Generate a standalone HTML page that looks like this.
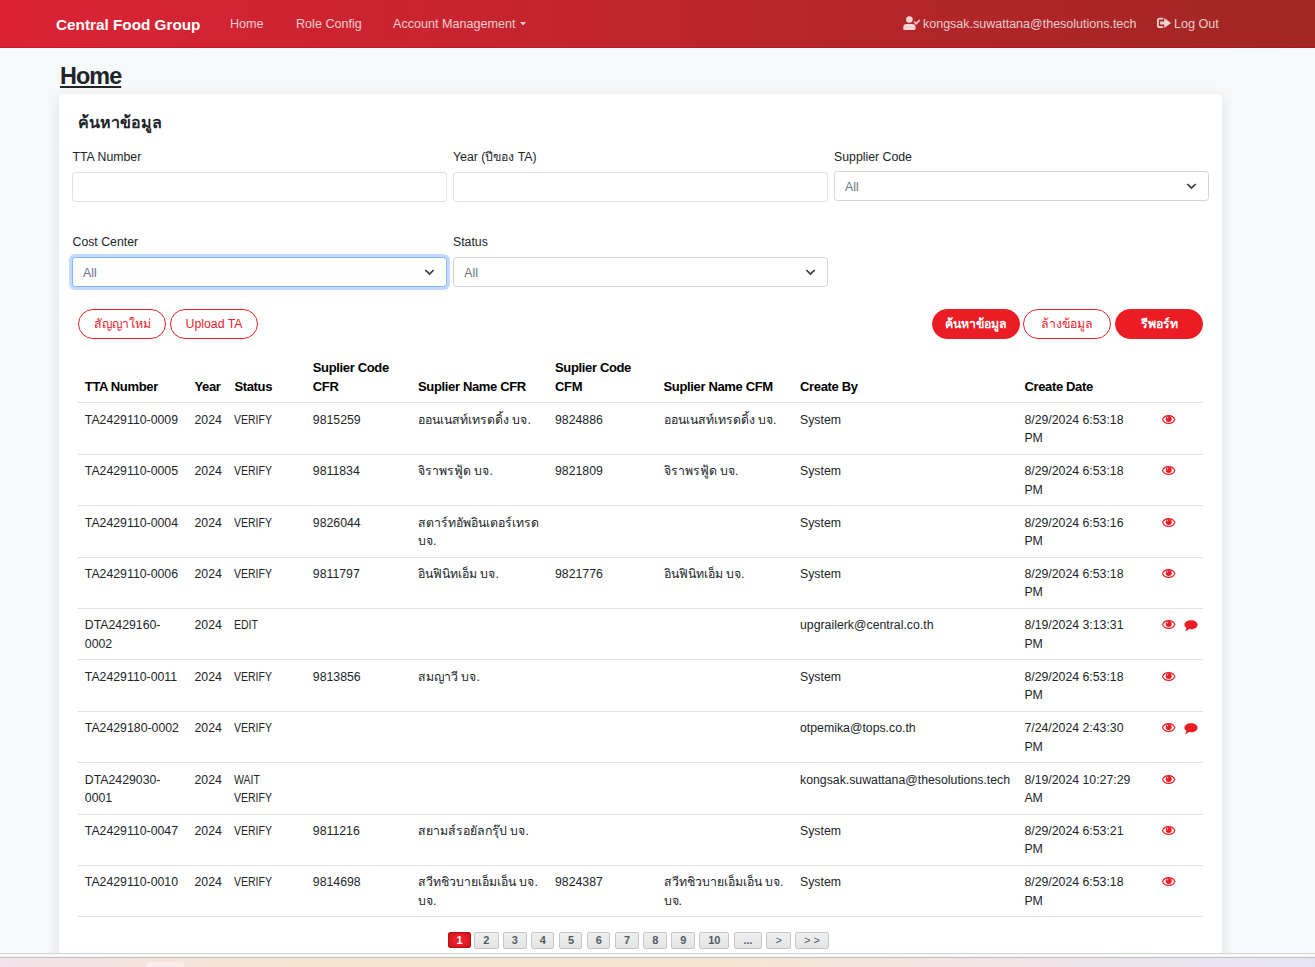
<!DOCTYPE html>
<html><head><meta charset="utf-8">
<style>
*{box-sizing:border-box;margin:0;padding:0}
html,body{width:1315px;height:967px;overflow:hidden}
body{background:#f7f8fa;font-family:"Liberation Sans",sans-serif;color:#212529;position:relative;font-size:12.3px}
.abs{position:absolute;white-space:nowrap}
#nav{position:absolute;left:0;top:0;width:1315px;height:48px;background:linear-gradient(90deg,#dc2335 0%,#a12624 100%);box-shadow:inset 0 -1px 0 rgba(180,0,20,.35)}
#nav .t{position:absolute;white-space:nowrap;color:rgba(255,255,255,.78);font-size:12.6px;line-height:16px}
#brand{position:absolute;left:56px;top:15.6px;color:#fff;font-weight:bold;font-size:15.3px;line-height:18px;white-space:nowrap}
#title{position:absolute;left:60px;top:62.5px;font-weight:bold;font-size:23.4px;letter-spacing:-0.95px;line-height:26px;text-decoration:underline;text-decoration-thickness:2px;text-underline-offset:2px;color:#212529}
#card{position:absolute;left:59px;top:94px;width:1163px;height:900px;background:#fff;border-radius:5px;box-shadow:0 3px 14px rgba(0,0,0,.1)}
.lbl{position:absolute;font-size:12.3px;line-height:16px;white-space:nowrap;color:#212529}
.inp{position:absolute;height:30px;width:374.5px;border:1px solid #dee2e6;border-radius:3.2px;background:#fff}
.sel{position:absolute;height:30px;width:374.5px;border:1px solid #d0d5db;border-radius:3.2px;background:#fff}
.sel span{position:absolute;left:10px;top:7px;font-size:12.3px;line-height:16px;color:#6c757d}
.sel svg{position:absolute;right:11px;top:9.8px}
.focus{border-color:#86b7fe;box-shadow:0 0 0 3px rgba(13,110,253,.25)}
.btn{position:absolute;top:309px;height:30px;border-radius:15px;border:1px solid #ea2129;color:#ea2129;background:#fff;font-size:12.3px;line-height:29.5px;text-align:center;white-space:nowrap}
.btn.fill{background:#ec1c24;color:#fff;font-weight:bold}
.hd{position:absolute;font-weight:bold;font-size:13px;letter-spacing:-0.35px;line-height:19px;white-space:nowrap;color:#000}
.ln{position:absolute;left:78px;width:1125px;height:1px;background:#dee2e6}
.c{position:absolute;font-size:12.3px;line-height:18.6px;white-space:nowrap;color:#212529}
.pg{position:absolute;top:931.5px;height:17px;border:1px solid #c6c6c6;border-radius:2px;background:linear-gradient(#f0f0f0,#e3e3e3);color:#555b66;font-weight:bold;font-size:11px;line-height:15px;text-align:center;white-space:nowrap}
.pg.act{top:932px;height:16px;line-height:14px;background:radial-gradient(ellipse at center,#ee1d26 40%,#c8121b 100%);border-color:#b50f17;color:#fff}
#tb{position:absolute;left:0;top:953px;width:1315px;height:14px;border-top:1px solid #d6d6d6;background:linear-gradient(90deg,#f2e2ea 0%,#f4e3dc 12%,#f5e4d0 22%,#f5e5ce 52%,#f2e5e3 72%,#ebe4ee 88%,#e6e4f4 100%)}
#tb:before{content:"";position:absolute;left:0;top:0;width:100%;height:3px;background:#f8f8f8;border-bottom:1px solid #bdbdbd}
#tbi{position:absolute;left:146px;top:8px;width:38px;height:10px;border-radius:4px;background:#f8ecec}
</style></head><body>
<div id="nav">
  <div id="brand">Central Food Group</div>
  <div class="t" style="left:230px;top:16px">Home</div>
  <div class="t" style="left:296px;top:16px">Role Config</div>
  <div class="t" style="left:393px;top:16px">Account Management</div>
  <svg class="abs" style="left:520px;top:22px" width="6" height="4" viewBox="0 0 6 4"><path d="M0 0H6L3 3.5Z" fill="rgba(255,255,255,.78)"/></svg>
  <svg class="abs" style="left:903px;top:16px" width="18" height="15" viewBox="0 0 18 15"><circle cx="6.4" cy="3.5" r="3.3" fill="rgba(255,255,255,.8)"/><path d="M0.3 14V11.2Q0.3 7.9 3.6 7.9H9.2Q12.5 7.9 12.5 11.2V13Q12.5 14 11.5 14H1.3Q0.3 14 0.3 13Z" fill="rgba(255,255,255,.8)"/><path d="M11.2 5.6L13.1 7.9L16.7 4" stroke="rgba(255,255,255,.8)" stroke-width="1.6" fill="none"/></svg>
  <div class="t" style="left:923px;top:16px;font-size:12.5px">kongsak.suwattana@thesolutions.tech</div>
  <svg class="abs" style="left:1157px;top:17px" width="15" height="12" viewBox="0 0 15 12"><path d="M6.2 1.7H2.6Q0.9 1.7 0.9 3.4V8.5Q0.9 10.2 2.6 10.2H6.2" stroke="rgba(255,255,255,.8)" stroke-width="1.8" fill="none"/><path d="M3.2 4.4H7.3V0.9L14 6L7.3 11.1V7.6H3.2Z" fill="rgba(255,255,255,.8)"/></svg>
  <div class="t" style="left:1174px;top:16px">Log Out</div>
</div>
<div id="title">Home</div>
<div id="card"></div>
<div class="abs" style="left:78px;top:112.5px;font-weight:bold;font-size:16px;line-height:20px;color:#212529">ค้นหาข้อมูล</div>
<div class="lbl" style="left:72.5px;top:149.2px">TTA Number</div>
<div class="lbl" style="left:453px;top:149.2px">Year (ปีของ TA)</div>
<div class="lbl" style="left:834px;top:149.2px">Supplier Code</div>
<div class="inp" style="left:72px;top:171.5px"></div>
<div class="inp" style="left:453.3px;top:171.5px"></div>
<div class="sel" style="left:834px;top:171px;height:29.6px"><span>All</span><svg width="11" height="8" viewBox="0 0 11 8"><path d="M1.3 2L5.5 6.1L9.7 2" stroke="#343a40" stroke-width="1.7" fill="none"/></svg></div>
<div class="lbl" style="left:72.5px;top:233.7px">Cost Center</div>
<div class="lbl" style="left:453px;top:233.7px">Status</div>
<div class="sel focus" style="left:72px;top:257px"><span>All</span><svg width="11" height="8" viewBox="0 0 11 8"><path d="M1.3 2L5.5 6.1L9.7 2" stroke="#343a40" stroke-width="1.7" fill="none"/></svg></div>
<div class="sel" style="left:453.3px;top:257px"><span>All</span><svg width="11" height="8" viewBox="0 0 11 8"><path d="M1.3 2L5.5 6.1L9.7 2" stroke="#343a40" stroke-width="1.7" fill="none"/></svg></div>
<div class="btn" style="left:78px;width:88px">สัญญาใหม่</div>
<div class="btn" style="left:170px;width:88px">Upload TA</div>
<div class="btn fill" style="left:932px;width:88px">ค้นหาข้อมูล</div>
<div class="btn" style="left:1023px;width:88px">ล้างข้อมูล</div>
<div class="btn fill" style="left:1115px;width:88px">รีพอร์ท</div>
<div class="hd" style="left:84.8px;top:376.9px">TTA Number</div>
<div class="hd" style="left:194.5px;top:376.9px">Year</div>
<div class="hd" style="left:234.4px;top:376.9px">Status</div>
<div class="hd" style="left:312.8px;top:357.9px">Suplier Code<br>CFR</div>
<div class="hd" style="left:418px;top:376.9px">Suplier Name CFR</div>
<div class="hd" style="left:555px;top:357.9px">Suplier Code<br>CFM</div>
<div class="hd" style="left:663.5px;top:376.9px">Suplier Name CFM</div>
<div class="hd" style="left:800px;top:376.9px">Create By</div>
<div class="hd" style="left:1024.4px;top:376.9px">Create Date</div>
<div class="ln" style="top:402px"></div>
<div class="c" style="left:84.8px;top:410.7px">TA2429110-0009</div>
<div class="c" style="left:194.5px;top:410.7px">2024</div>
<div class="c" style="left:234.4px;top:410.7px;transform:scaleX(.855);transform-origin:0 0">VERIFY</div>
<div class="c" style="left:312.8px;top:410.7px">9815259</div>
<div class="c" style="left:418.0px;top:410.7px">ออนเนสท์เทรดดิ้ง บจ.</div>
<div class="c" style="left:555.0px;top:410.7px">9824886</div>
<div class="c" style="left:663.5px;top:410.7px">ออนเนสท์เทรดดิ้ง บจ.</div>
<div class="c" style="left:800.0px;top:410.7px">System</div>
<div class="c" style="left:1024.4px;top:410.7px">8/29/2024 6:53:18<br>PM</div>
<svg class="abs" style="left:1161.5px;top:414.7px" width="14" height="9" viewBox="0 0 14 9"><path d="M6.7 0.6C3.6 0.6 1.3 2.5 0.5 4.5C1.3 6.5 3.6 8.4 6.7 8.4C9.8 8.4 12.1 6.5 12.9 4.5C12.1 2.5 9.8 0.6 6.7 0.6Z" fill="none" stroke="#ec1c24" stroke-width="1.1"/><circle cx="6.7" cy="4" r="3" fill="#ec1c24"/><circle cx="5.5" cy="2.7" r=".75" fill="#fff" opacity=".75"/></svg>
<div class="ln" style="top:453.8px"></div>
<div class="c" style="left:84.8px;top:462.1px">TA2429110-0005</div>
<div class="c" style="left:194.5px;top:462.1px">2024</div>
<div class="c" style="left:234.4px;top:462.1px;transform:scaleX(.855);transform-origin:0 0">VERIFY</div>
<div class="c" style="left:312.8px;top:462.1px">9811834</div>
<div class="c" style="left:418.0px;top:462.1px">จิราพรฟู้ด บจ.</div>
<div class="c" style="left:555.0px;top:462.1px">9821809</div>
<div class="c" style="left:663.5px;top:462.1px">จิราพรฟู้ด บจ.</div>
<div class="c" style="left:800.0px;top:462.1px">System</div>
<div class="c" style="left:1024.4px;top:462.1px">8/29/2024 6:53:18<br>PM</div>
<svg class="abs" style="left:1161.5px;top:466.1px" width="14" height="9" viewBox="0 0 14 9"><path d="M6.7 0.6C3.6 0.6 1.3 2.5 0.5 4.5C1.3 6.5 3.6 8.4 6.7 8.4C9.8 8.4 12.1 6.5 12.9 4.5C12.1 2.5 9.8 0.6 6.7 0.6Z" fill="none" stroke="#ec1c24" stroke-width="1.1"/><circle cx="6.7" cy="4" r="3" fill="#ec1c24"/><circle cx="5.5" cy="2.7" r=".75" fill="#fff" opacity=".75"/></svg>
<div class="ln" style="top:505.2px"></div>
<div class="c" style="left:84.8px;top:513.5px">TA2429110-0004</div>
<div class="c" style="left:194.5px;top:513.5px">2024</div>
<div class="c" style="left:234.4px;top:513.5px;transform:scaleX(.855);transform-origin:0 0">VERIFY</div>
<div class="c" style="left:312.8px;top:513.5px">9826044</div>
<div class="c" style="left:418.0px;top:513.5px">สตาร์ทอัพอินเตอร์เทรด<br>บจ.</div>
<div class="c" style="left:800.0px;top:513.5px">System</div>
<div class="c" style="left:1024.4px;top:513.5px">8/29/2024 6:53:16<br>PM</div>
<svg class="abs" style="left:1161.5px;top:517.5px" width="14" height="9" viewBox="0 0 14 9"><path d="M6.7 0.6C3.6 0.6 1.3 2.5 0.5 4.5C1.3 6.5 3.6 8.4 6.7 8.4C9.8 8.4 12.1 6.5 12.9 4.5C12.1 2.5 9.8 0.6 6.7 0.6Z" fill="none" stroke="#ec1c24" stroke-width="1.1"/><circle cx="6.7" cy="4" r="3" fill="#ec1c24"/><circle cx="5.5" cy="2.7" r=".75" fill="#fff" opacity=".75"/></svg>
<div class="ln" style="top:556.6px"></div>
<div class="c" style="left:84.8px;top:564.9px">TA2429110-0006</div>
<div class="c" style="left:194.5px;top:564.9px">2024</div>
<div class="c" style="left:234.4px;top:564.9px;transform:scaleX(.855);transform-origin:0 0">VERIFY</div>
<div class="c" style="left:312.8px;top:564.9px">9811797</div>
<div class="c" style="left:418.0px;top:564.9px">อินฟินิทเอ็ม บจ.</div>
<div class="c" style="left:555.0px;top:564.9px">9821776</div>
<div class="c" style="left:663.5px;top:564.9px">อินฟินิทเอ็ม บจ.</div>
<div class="c" style="left:800.0px;top:564.9px">System</div>
<div class="c" style="left:1024.4px;top:564.9px">8/29/2024 6:53:18<br>PM</div>
<svg class="abs" style="left:1161.5px;top:568.9px" width="14" height="9" viewBox="0 0 14 9"><path d="M6.7 0.6C3.6 0.6 1.3 2.5 0.5 4.5C1.3 6.5 3.6 8.4 6.7 8.4C9.8 8.4 12.1 6.5 12.9 4.5C12.1 2.5 9.8 0.6 6.7 0.6Z" fill="none" stroke="#ec1c24" stroke-width="1.1"/><circle cx="6.7" cy="4" r="3" fill="#ec1c24"/><circle cx="5.5" cy="2.7" r=".75" fill="#fff" opacity=".75"/></svg>
<div class="ln" style="top:608.0px"></div>
<div class="c" style="left:84.8px;top:616.3px">DTA2429160-<br>0002</div>
<div class="c" style="left:194.5px;top:616.3px">2024</div>
<div class="c" style="left:234.4px;top:616.3px;transform:scaleX(.855);transform-origin:0 0">EDIT</div>
<div class="c" style="left:800.0px;top:616.3px">upgrailerk@central.co.th</div>
<div class="c" style="left:1024.4px;top:616.3px">8/19/2024 3:13:31<br>PM</div>
<svg class="abs" style="left:1161.5px;top:620.3px" width="14" height="9" viewBox="0 0 14 9"><path d="M6.7 0.6C3.6 0.6 1.3 2.5 0.5 4.5C1.3 6.5 3.6 8.4 6.7 8.4C9.8 8.4 12.1 6.5 12.9 4.5C12.1 2.5 9.8 0.6 6.7 0.6Z" fill="none" stroke="#ec1c24" stroke-width="1.1"/><circle cx="6.7" cy="4" r="3" fill="#ec1c24"/><circle cx="5.5" cy="2.7" r=".75" fill="#fff" opacity=".75"/></svg>
<svg class="abs" style="left:1183.6px;top:619.8px" width="14" height="12" viewBox="0 0 14 12"><path d="M7 0.3C3.3 0.3 0.4 2.3 0.4 4.7C0.4 6 1.2 7.1 2.4 7.9C2.2 9 1.6 10.1 0.9 11.2C2.6 11 4.1 10.1 5 9.1C5.6 9.2 6.3 9.2 7 9.2C10.7 9.2 13.6 7.2 13.6 4.7C13.6 2.3 10.7 0.3 7 0.3Z" fill="#ec1c24"/></svg>
<div class="ln" style="top:659.4px"></div>
<div class="c" style="left:84.8px;top:667.7px">TA2429110-0011</div>
<div class="c" style="left:194.5px;top:667.7px">2024</div>
<div class="c" style="left:234.4px;top:667.7px;transform:scaleX(.855);transform-origin:0 0">VERIFY</div>
<div class="c" style="left:312.8px;top:667.7px">9813856</div>
<div class="c" style="left:418.0px;top:667.7px">สมญาวี บจ.</div>
<div class="c" style="left:800.0px;top:667.7px">System</div>
<div class="c" style="left:1024.4px;top:667.7px">8/29/2024 6:53:18<br>PM</div>
<svg class="abs" style="left:1161.5px;top:671.7px" width="14" height="9" viewBox="0 0 14 9"><path d="M6.7 0.6C3.6 0.6 1.3 2.5 0.5 4.5C1.3 6.5 3.6 8.4 6.7 8.4C9.8 8.4 12.1 6.5 12.9 4.5C12.1 2.5 9.8 0.6 6.7 0.6Z" fill="none" stroke="#ec1c24" stroke-width="1.1"/><circle cx="6.7" cy="4" r="3" fill="#ec1c24"/><circle cx="5.5" cy="2.7" r=".75" fill="#fff" opacity=".75"/></svg>
<div class="ln" style="top:710.8px"></div>
<div class="c" style="left:84.8px;top:719.1px">TA2429180-0002</div>
<div class="c" style="left:194.5px;top:719.1px">2024</div>
<div class="c" style="left:234.4px;top:719.1px;transform:scaleX(.855);transform-origin:0 0">VERIFY</div>
<div class="c" style="left:800.0px;top:719.1px">otpemika@tops.co.th</div>
<div class="c" style="left:1024.4px;top:719.1px">7/24/2024 2:43:30<br>PM</div>
<svg class="abs" style="left:1161.5px;top:723.1px" width="14" height="9" viewBox="0 0 14 9"><path d="M6.7 0.6C3.6 0.6 1.3 2.5 0.5 4.5C1.3 6.5 3.6 8.4 6.7 8.4C9.8 8.4 12.1 6.5 12.9 4.5C12.1 2.5 9.8 0.6 6.7 0.6Z" fill="none" stroke="#ec1c24" stroke-width="1.1"/><circle cx="6.7" cy="4" r="3" fill="#ec1c24"/><circle cx="5.5" cy="2.7" r=".75" fill="#fff" opacity=".75"/></svg>
<svg class="abs" style="left:1183.6px;top:722.6px" width="14" height="12" viewBox="0 0 14 12"><path d="M7 0.3C3.3 0.3 0.4 2.3 0.4 4.7C0.4 6 1.2 7.1 2.4 7.9C2.2 9 1.6 10.1 0.9 11.2C2.6 11 4.1 10.1 5 9.1C5.6 9.2 6.3 9.2 7 9.2C10.7 9.2 13.6 7.2 13.6 4.7C13.6 2.3 10.7 0.3 7 0.3Z" fill="#ec1c24"/></svg>
<div class="ln" style="top:762.2px"></div>
<div class="c" style="left:84.8px;top:770.5px">DTA2429030-<br>0001</div>
<div class="c" style="left:194.5px;top:770.5px">2024</div>
<div class="c" style="left:234.4px;top:770.5px;transform:scaleX(.855);transform-origin:0 0">WAIT<br>VERIFY</div>
<div class="c" style="left:800.0px;top:770.5px">kongsak.suwattana@thesolutions.tech</div>
<div class="c" style="left:1024.4px;top:770.5px">8/19/2024 10:27:29<br>AM</div>
<svg class="abs" style="left:1161.5px;top:774.5px" width="14" height="9" viewBox="0 0 14 9"><path d="M6.7 0.6C3.6 0.6 1.3 2.5 0.5 4.5C1.3 6.5 3.6 8.4 6.7 8.4C9.8 8.4 12.1 6.5 12.9 4.5C12.1 2.5 9.8 0.6 6.7 0.6Z" fill="none" stroke="#ec1c24" stroke-width="1.1"/><circle cx="6.7" cy="4" r="3" fill="#ec1c24"/><circle cx="5.5" cy="2.7" r=".75" fill="#fff" opacity=".75"/></svg>
<div class="ln" style="top:813.6px"></div>
<div class="c" style="left:84.8px;top:821.9px">TA2429110-0047</div>
<div class="c" style="left:194.5px;top:821.9px">2024</div>
<div class="c" style="left:234.4px;top:821.9px;transform:scaleX(.855);transform-origin:0 0">VERIFY</div>
<div class="c" style="left:312.8px;top:821.9px">9811216</div>
<div class="c" style="left:418.0px;top:821.9px">สยามส์รอยัลกรุ๊ป บจ.</div>
<div class="c" style="left:800.0px;top:821.9px">System</div>
<div class="c" style="left:1024.4px;top:821.9px">8/29/2024 6:53:21<br>PM</div>
<svg class="abs" style="left:1161.5px;top:825.9px" width="14" height="9" viewBox="0 0 14 9"><path d="M6.7 0.6C3.6 0.6 1.3 2.5 0.5 4.5C1.3 6.5 3.6 8.4 6.7 8.4C9.8 8.4 12.1 6.5 12.9 4.5C12.1 2.5 9.8 0.6 6.7 0.6Z" fill="none" stroke="#ec1c24" stroke-width="1.1"/><circle cx="6.7" cy="4" r="3" fill="#ec1c24"/><circle cx="5.5" cy="2.7" r=".75" fill="#fff" opacity=".75"/></svg>
<div class="ln" style="top:865.0px"></div>
<div class="c" style="left:84.8px;top:873.3px">TA2429110-0010</div>
<div class="c" style="left:194.5px;top:873.3px">2024</div>
<div class="c" style="left:234.4px;top:873.3px;transform:scaleX(.855);transform-origin:0 0">VERIFY</div>
<div class="c" style="left:312.8px;top:873.3px">9814698</div>
<div class="c" style="left:418.0px;top:873.3px">สวีทชิวบายเอ็มเอ็น บจ.<br>บจ.</div>
<div class="c" style="left:555.0px;top:873.3px">9824387</div>
<div class="c" style="left:663.5px;top:873.3px">สวีทชิวบายเอ็มเอ็น บจ.<br>บจ.</div>
<div class="c" style="left:800.0px;top:873.3px">System</div>
<div class="c" style="left:1024.4px;top:873.3px">8/29/2024 6:53:18<br>PM</div>
<svg class="abs" style="left:1161.5px;top:877.3px" width="14" height="9" viewBox="0 0 14 9"><path d="M6.7 0.6C3.6 0.6 1.3 2.5 0.5 4.5C1.3 6.5 3.6 8.4 6.7 8.4C9.8 8.4 12.1 6.5 12.9 4.5C12.1 2.5 9.8 0.6 6.7 0.6Z" fill="none" stroke="#ec1c24" stroke-width="1.1"/><circle cx="6.7" cy="4" r="3" fill="#ec1c24"/><circle cx="5.5" cy="2.7" r=".75" fill="#fff" opacity=".75"/></svg>
<div class="ln" style="top:916.4px"></div>
<div class="pg act" style="left:448px;width:23px">1</div>
<div class="pg" style="left:474px;width:24.5px">2</div>
<div class="pg" style="left:503px;width:23.7px">3</div>
<div class="pg" style="left:531.3px;width:23.1px">4</div>
<div class="pg" style="left:559.4px;width:23.1px">5</div>
<div class="pg" style="left:587.2px;width:23.1px">6</div>
<div class="pg" style="left:615.2px;width:23.5px">7</div>
<div class="pg" style="left:643.3px;width:24.1px">8</div>
<div class="pg" style="left:671.2px;width:24.3px">9</div>
<div class="pg" style="left:699.3px;width:30.1px">10</div>
<div class="pg" style="left:734.3px;width:27.4px">...</div>
<div class="pg" style="left:766.2px;width:25.1px;font-weight:normal">&gt;</div>
<div class="pg" style="left:795.4px;width:33.2px;font-weight:normal">&gt; &gt;</div>
<div id="tb"><div id="tbi"></div></div>
</body></html>
